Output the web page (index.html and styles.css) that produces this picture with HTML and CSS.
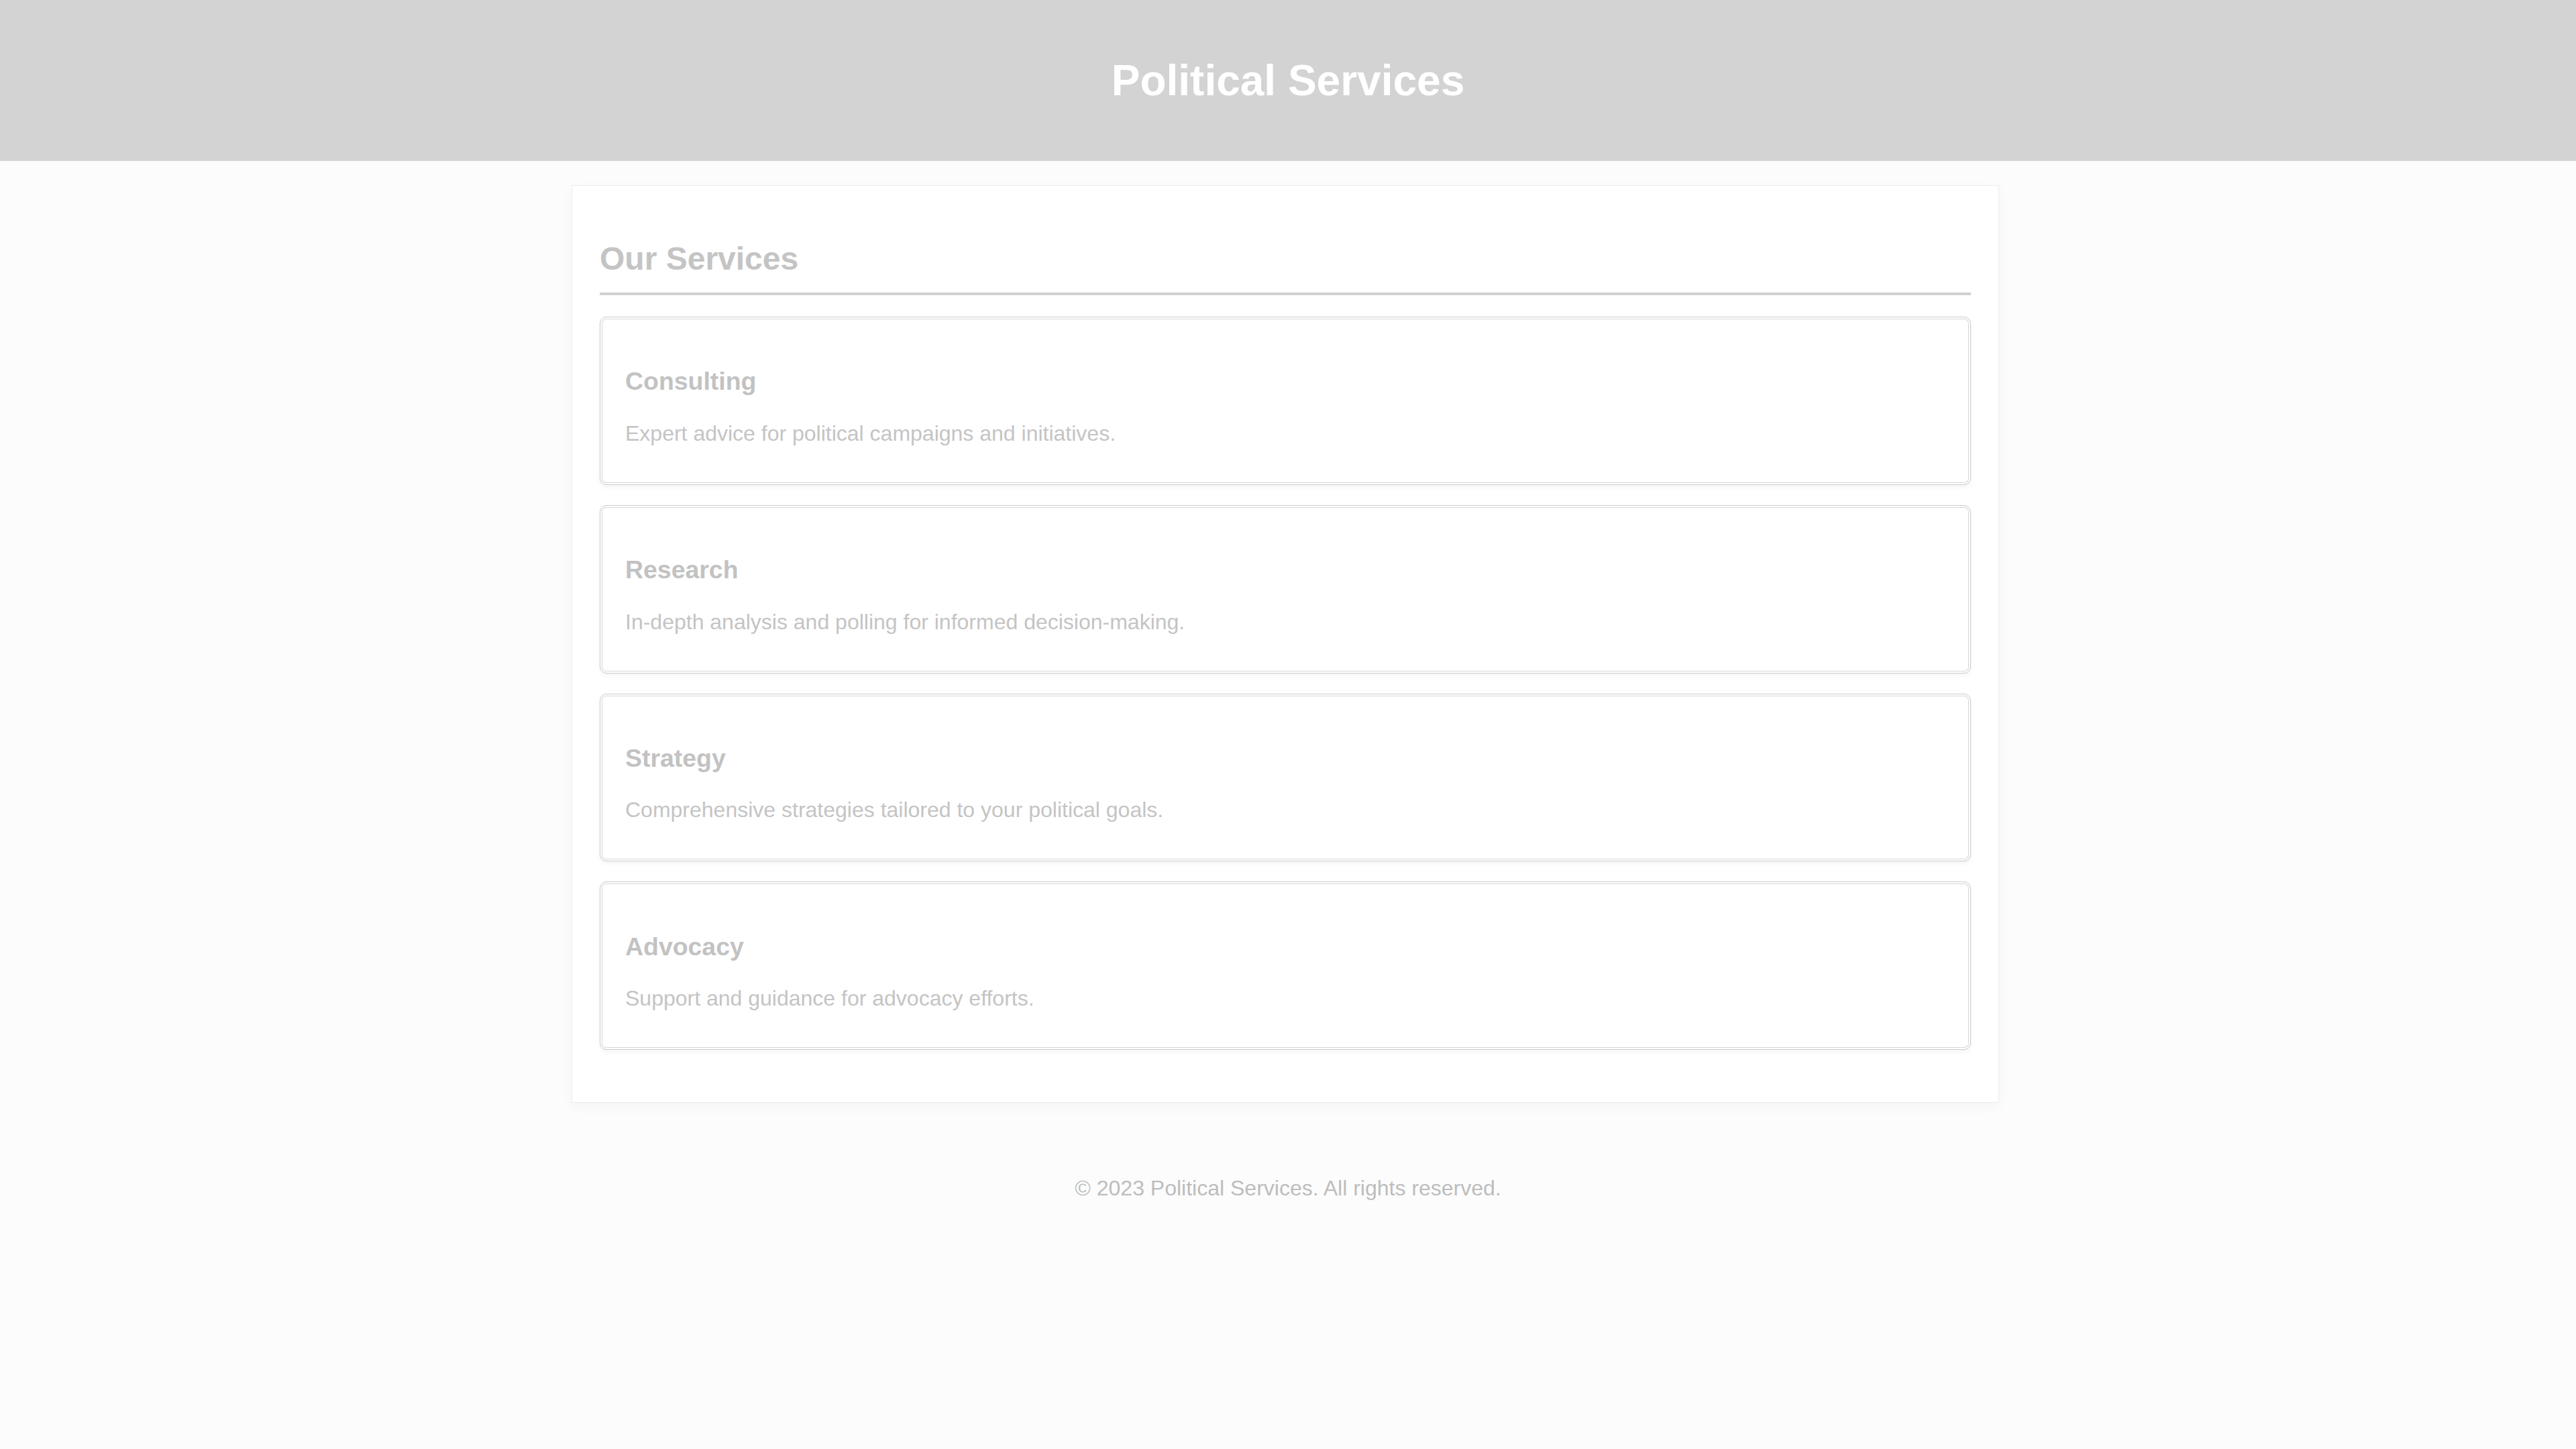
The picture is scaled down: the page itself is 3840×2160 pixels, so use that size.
FILE: index.html
```html
<!DOCTYPE html>
<html lang="en">
<head>
<meta charset="utf-8">
<title>Political Services</title>
<link rel="stylesheet" href="styles.css">
</head>
<body>
<header class="site-header">
  <h1 class="site-title">Political Services</h1>
</header>
<main class="container">
  <h2 class="section-title">Our Services</h2>
  <div class="card">
    <h3 class="card-title">Consulting</h3>
    <p class="card-text">Expert advice for political campaigns and initiatives.</p>
  </div>
  <div class="card">
    <h3 class="card-title">Research</h3>
    <p class="card-text">In-depth analysis and polling for informed decision-making.</p>
  </div>
  <div class="card">
    <h3 class="card-title">Strategy</h3>
    <p class="card-text">Comprehensive strategies tailored to your political goals.</p>
  </div>
  <div class="card">
    <h3 class="card-title">Advocacy</h3>
    <p class="card-text">Support and guidance for advocacy efforts.</p>
  </div>
</main>
<footer class="site-footer">
  <p class="footer-text">&copy; 2023 Political Services. All rights reserved.</p>
</footer>
</body>
</html>
```
FILE: styles.css
```css
html, body {
  margin: 0;
  padding: 0;
}
body {
  background: #fcfcfc;
  font-family: "Liberation Sans", Arial, sans-serif;
  font-size: 32px;
  line-height: normal;
}
.site-header {
  background: #d3d3d3;
  padding: 40px;
  text-align: center;
}
.site-title {
  margin: 42.88px 0;
  font-size: 64px;
  font-weight: bold;
  color: #ffffff;
}
.container {
  box-sizing: border-box;
  width: 2128px;
  margin: 36px auto 33px calc(50% - 1068px);
  padding: 40px 41px 48px;
  background: #ffffff;
  border: 1px solid #ececec;
  box-shadow: 0 6px 18px rgba(0, 0, 0, 0.035);
}
.section-title {
  margin: 41px 0 32px;
  padding-bottom: 23px;
  font-size: 48px;
  font-weight: bold;
  color: #c4c4c4;
  border-bottom: 4px solid #d0d0d0;
}
.card {
  margin-bottom: 30px;
  padding: 37px 37px 25px;
  border: 1px solid #cbcbcb;
  border-radius: 10px;
  background: #ffffff;
  box-shadow: inset 0 0 0 2px #ffffff, inset 0 0 0 3px #d6d6d6, 0 4px 6px rgba(0, 0, 0, 0.04);
}
.card-title {
  margin: 37.44px 0;
  font-size: 37.44px;
  font-weight: bold;
  color: #c2c2c2;
}
.card-text {
  margin: 32px 0;
  font-size: 32px;
  color: #c4c4c4;
}
.site-footer {
  padding: 44px 40px 40px;
  text-align: center;
}
.footer-text {
  margin: 32px 0;
  font-size: 32px;
  color: #bdbdbd;
}
```
